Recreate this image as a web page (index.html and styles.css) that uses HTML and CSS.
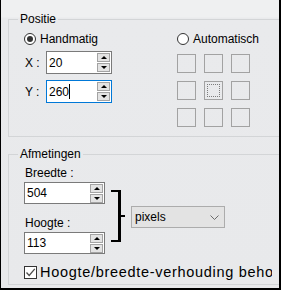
FILE: index.html
```html
<!DOCTYPE html>
<html lang="nl">
<head>
  <meta charset="UTF-8" />
  <title>Positie en afmetingen</title>
  <link rel="stylesheet" href="styles.css">
</head>
<body>
  <div class="dialog">

    <fieldset class="group group-pos">
      <legend>Positie</legend>
      <div class="pos-body">
        <div class="pos-left">
          <label class="radio"><span class="radio-mark checked"></span>Handmatig</label>
          <div class="field-row">
            <span class="axis">X :</span>
            <div class="spin spin-small">
              <span class="spin-val">20</span>
              <span class="spin-btns"><span class="spin-btn up"></span><span class="spin-btn down"></span></span>
            </div>
          </div>
          <div class="field-row row-y">
            <span class="axis">Y :</span>
            <div class="spin spin-small focused">
              <span class="spin-val">260<span class="caret"></span></span>
              <span class="spin-btns"><span class="spin-btn up"></span><span class="spin-btn down"></span></span>
            </div>
          </div>
        </div>
        <div class="pos-right">
          <label class="radio"><span class="radio-mark"></span>Automatisch</label>
          <div class="anchor-grid">
            <span class="cell"></span><span class="cell"></span><span class="cell"></span>
            <span class="cell"></span><span class="cell current"></span><span class="cell"></span>
            <span class="cell"></span><span class="cell"></span><span class="cell"></span>
          </div>
        </div>
      </div>
    </fieldset>

    <fieldset class="group group-size">
      <legend>Afmetingen</legend>
      <div class="size-body">
        <div class="size-fields">
          <span class="field-label">Breedte :</span>
          <div class="spin spin-wide">
            <span class="spin-val">504</span>
            <span class="spin-btns"><span class="spin-btn up"></span><span class="spin-btn down"></span></span>
          </div>
          <span class="field-label label-h">Hoogte :</span>
          <div class="spin spin-wide">
            <span class="spin-val">113</span>
            <span class="spin-btns"><span class="spin-btn up"></span><span class="spin-btn down"></span></span>
          </div>
        </div>
        <div class="bracket"></div>
        <div class="bracket-stub"></div>
        <div class="unit-select">
          <span>pixels</span>
          <svg width="9" height="5" viewBox="0 0 9 5"><polyline points="0.5,0.5 4.5,4.5 8.5,0.5" fill="none" stroke="#6b6b6b" stroke-width="1"/></svg>
        </div>
      </div>
      <label class="check">
        <span class="check-box"><svg width="11" height="11" viewBox="0 0 11 11"><polyline points="1.5,5.5 4.2,8.5 9.8,1.8" fill="none" stroke="#4d4d4d" stroke-width="1.3"/></svg></span>
        <span class="check-text">Hoogte/breedte-verhouding behouden</span>
      </label>
    </fieldset>

  </div>
</body>
</html>
```

FILE: styles.css
```css
body {
  margin: 0;
  font-family: 'Liberation Sans', Arial, sans-serif;
  font-size: 12px;
  color: #000;
}

.dialog {
  width: 281px;
  height: 290px;
  box-sizing: border-box;
  padding-top: 12px;
  border-left: 1px solid #000;
  border-right: 2px solid #000;
  border-bottom: 2px solid #000;
  background: linear-gradient(to bottom, #eff0f1 0, #eff0f1 17px, #e9eaec 18px, #e8e9eb 100%);
  overflow: hidden;
}

.group {
  margin: 0 -40px 0 7px;
  padding: 0 0 0 15px;
  border: 1px solid #d3d5d7;
  min-width: 0;
}

.group legend {
  padding: 0 2px;
  margin-left: -6px;
  line-height: 14px;
}

.group-size {
  margin-top: 10px;
  padding-bottom: 4px;
}

/* Positie */
.pos-body {
  display: flex;
  padding-top: 7px;
  padding-bottom: 9px;
}

.pos-left {
  width: 153px;
  flex: none;
}

.radio {
  display: flex;
  align-items: center;
  gap: 4px;
  height: 12px;
  line-height: 12px;
}

.radio-mark {
  width: 12px;
  height: 12px;
  box-sizing: border-box;
  border: 1px solid #333;
  border-radius: 50%;
  background: #fff;
  display: flex;
  align-items: center;
  justify-content: center;
}

.radio-mark.checked::after {
  content: '';
  width: 6px;
  height: 6px;
  border-radius: 50%;
  background: #333;
}

.field-row {
  display: flex;
  align-items: center;
  margin-top: 6px;
}

.axis {
  width: 21px;
  padding-left: 1px;
  flex: none;
}

.spin {
  display: flex;
  align-items: center;
  height: 23px;
  box-sizing: border-box;
  border: 1px solid #7a7a7a;
  background: #fff;
  padding: 0 1px 0 2px;
}

.spin-small { width: 66px; }
.spin-wide { width: 81px; height: 22px; }

.spin.focused {
  border-color: #0078d7;
}

.spin-val {
  flex: 1;
  line-height: 14px;
}

.caret {
  display: inline-block;
  width: 1px;
  height: 15px;
  background: #000;
  vertical-align: -3px;
}

.spin-btns {
  display: flex;
  flex-direction: column;
  gap: 1px;
}

.spin-btn {
  width: 13px;
  height: 9px;
  box-sizing: border-box;
  border: 1px solid #a3a3a3;
  background: #e3e3e3;
  display: flex;
  align-items: center;
  justify-content: center;
}

.spin-btn::after {
  content: '';
  border-left: 3px solid transparent;
  border-right: 3px solid transparent;
}

.spin-btn.up::after { border-bottom: 3px solid #000; }
.spin-btn.down::after { border-top: 3px solid #000; }

.anchor-grid {
  display: grid;
  grid-template-columns: repeat(3, 19px);
  grid-auto-rows: 19px;
  gap: 8px;
  margin-top: 9px;
}

.cell {
  border: 1px solid #a2a2a2;
  box-sizing: border-box;
  display: flex;
  align-items: center;
  justify-content: center;
}

.cell.current::after {
  content: '';
  width: 11px;
  height: 11px;
  border: 1px dotted #7c7c7c;
}

/* Afmetingen */
.size-body {
  display: flex;
  align-items: flex-start;
}

.size-fields {
  display: flex;
  flex-direction: column;
  width: 81px;
  flex: none;
}

.field-label {
  line-height: 14px;
  padding-left: 1px;
  margin-top: 5px;
  margin-bottom: 2px;
}

.field-label.label-h {
  margin-top: 12px;
}

.bracket {
  width: 10px;
  height: 52px;
  box-sizing: border-box;
  margin: 29px 0 0 6px;
  border-top: 2px solid #000;
  border-right: 3px solid #000;
  border-bottom: 2px solid #000;
}

.bracket-stub {
  width: 4px;
  height: 2px;
  background: #000;
  margin-top: 54px;
}

.unit-select {
  width: 94px;
  height: 22px;
  box-sizing: border-box;
  margin: 45px 0 0 6px;
  padding: 0 5px 0 3px;
  border: 1px solid #acacac;
  background: #e3e3e3;
  display: flex;
  align-items: center;
  justify-content: space-between;
}

.check {
  display: flex;
  align-items: center;
  gap: 3px;
  width: 248px;
  margin-top: 10px;
  height: 16px;
  white-space: nowrap;
  overflow: hidden;
}

.check-box {
  width: 13px;
  height: 13px;
  flex: none;
  box-sizing: border-box;
  border: 1px solid #333;
  background: #fff;
  display: flex;
  align-items: center;
  justify-content: center;
}

.check-text {
  font-size: 14.5px;
  letter-spacing: 0.7px;
}
```
